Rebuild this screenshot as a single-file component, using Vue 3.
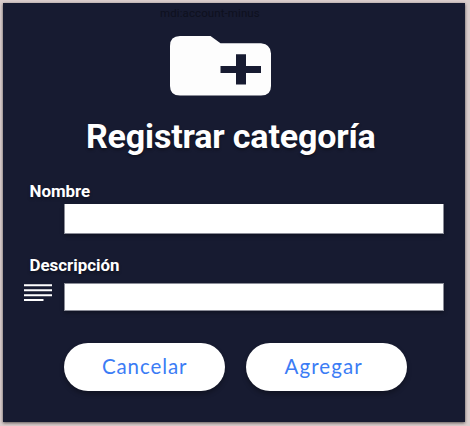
<script setup>
import { ref } from 'vue'

const nombre = ref('')
const descripcion = ref('')
</script>

<template>
  <div class="page">
    <form class="panel" @submit.prevent>
      <div class="hint">mdi:account-minus</div>
      <svg class="folder" viewBox="0 0 101 60" preserveAspectRatio="none">
        <path
          fill="#fdfdfd"
          fill-rule="evenodd"
          d="M10 0H40.500L50.500 7.300H91Q101 8.500 101 17.500V50Q101 59.600 91 59.600H10Q0 59.600 0 50V10Q0 0 10 0ZM66 18.300V30H50.500V37H66V48.500H76V37H91V30H76V18.300Z"
        />
      </svg>
      <h1>Registrar categoría</h1>
      <label class="label first" for="nombre">Nombre</label>
      <div class="row">
        <span class="lead"></span>
        <input id="nombre" v-model="nombre" class="field tall" type="text" />
      </div>
      <label class="label second" for="descripcion">Descripción</label>
      <div class="row">
        <span class="lead">
          <svg class="lines" viewBox="0 0 28 18">
            <path stroke="#fff" stroke-width="1.9" d="M0 2.200H28M0 7.300H28M0 12.300H28M0 17H19.500" />
          </svg>
        </span>
        <input id="descripcion" v-model="descripcion" class="field short" type="text" />
      </div>
      <div class="actions">
        <button type="button"><span class="cancel">Cancelar</span></button>
        <button type="submit"><span class="add">Agregar</span></button>
      </div>
    </form>
  </div>
</template>

<style>
body {
  margin: 0;
}
</style>

<style scoped>
.page {
  box-sizing: border-box;
  width: 470px;
  height: 426px;
  padding: 3px 5px 4px 3px;
  background: #dbcecd;
  overflow: hidden;
}
.panel {
  box-sizing: border-box;
  display: flex;
  flex-direction: column;
  width: 462px;
  height: 419px;
  background: #171b31;
  box-shadow: 0 1px 3px rgba(0, 0, 0, 0.6);
  font-family: Roboto, sans-serif;
}
.hint {
  height: 33px;
  padding-left: 157px;
  box-sizing: border-box;
  padding-top: 4px;
  font-size: 11.5px;
  line-height: 13px;
  letter-spacing: 0.1px;
  color: #0e101e;
}
.folder {
  display: block;
  width: 101px;
  height: 60px;
  margin-left: 167px;
}
h1 {
  margin: 19px 0 0 83px;
  height: 43px;
  font-size: 34px;
  line-height: 42px;
  font-weight: 700;
  letter-spacing: -0.17px;
  color: #fff;
  white-space: nowrap;
  text-shadow: 0 2px 3px rgba(0, 0, 0, 0.35);
}
.label {
  height: 20px;
  margin-left: 26.500px;
  font-size: 16.900px;
  line-height: 20px;
  font-weight: 700;
  color: #fff;
  text-shadow: 0 2px 3px rgba(0, 0, 0, 0.35);
}
.first {
  margin-top: 23px;
  margin-bottom: 3px;
}
.second {
  margin-top: 21px;
  margin-bottom: 8px;
}
.row {
  display: flex;
}
.lead {
  box-sizing: border-box;
  width: 61px;
  padding-left: 21.300px;
}
.lines {
  display: block;
  width: 28px;
  height: 18px;
}
.field {
  box-sizing: border-box;
  width: 380px;
  padding: 0 8px;
  border: 1px solid #8b8d98;
  border-top: 0;
  border-radius: 0;
  background: #fff;
  box-shadow: 0 2px 4px rgba(0, 0, 0, 0.3);
  font: 16px Roboto, sans-serif;
  outline: 0;
}
.tall {
  height: 30px;
}
.short {
  height: 28px;
  border-top: 1px solid #8b8d98;
}
.actions {
  display: flex;
  gap: 21.500px;
  margin: 32px 0 0 61.400px;
}
button {
  width: 160.500px;
  height: 48px;
  padding: 0 0 2px;
  border: 0;
  border-radius: 24px;
  background: #fff;
  box-shadow: 0 3px 5px rgba(0, 0, 0, 0.3);
  font: 400 20.500px Lato, sans-serif;
  color: #3b7cf5;
}
.cancel {
  letter-spacing: 0.9px;
}
.add {
  margin-right: 6px;
  letter-spacing: 1.1px;
}
</style>
